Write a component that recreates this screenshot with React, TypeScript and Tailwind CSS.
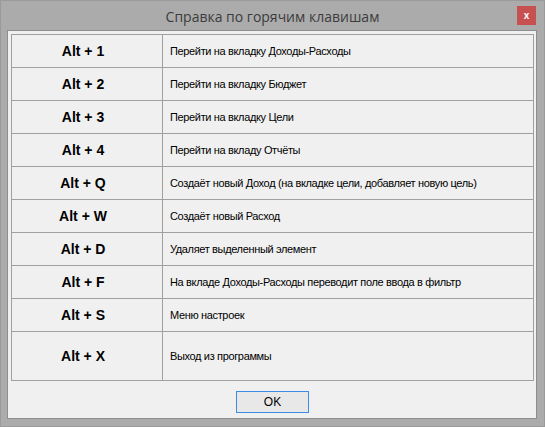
import React from "react";

const rows: { key: string; text: string; tall?: boolean }[] = [
  { key: "Alt + 1", text: "Перейти на вкладку Доходы-Расходы" },
  { key: "Alt + 2", text: "Перейти на вкладку Бюджет" },
  { key: "Alt + 3", text: "Перейти на вкладку Цели" },
  { key: "Alt + 4", text: "Перейти на вкладу Отчёты" },
  { key: "Alt + Q", text: "Создаёт новый Доход (на вкладке цели, добавляет новую цель)" },
  { key: "Alt + W", text: "Создаёт новый Расход" },
  { key: "Alt + D", text: "Удаляет выделенный элемент" },
  { key: "Alt + F", text: "На вкладе Доходы-Расходы переводит поле ввода в фильтр" },
  { key: "Alt + S", text: "Меню настроек" },
  { key: "Alt + X", text: "Выход из программы", tall: true },
];

export default function App() {
  return (
    <div className="w-[545px] h-[427px] bg-[#ababab] border border-[#9a9a9a] flex flex-col font-['Liberation_Sans',Arial,sans-serif]">
      {/* title bar */}
      <div className="h-[29px] flex items-center relative">
        <div className="flex-1 text-center text-[14px] text-[#3c3c3c] pt-[1px] font-['Open_Sans','Liberation_Sans',sans-serif]">
          Справка по горячим клавишам
        </div>
        <div className="absolute left-[516px] top-[5px] w-[19px] h-[19px] bg-[#c75050] flex items-center justify-center text-white text-[10px] font-bold leading-none">
          x
        </div>
      </div>
      {/* client area */}
      <div className="ml-[6px] mr-[7px] h-[389px] border border-[#8e8e8e] bg-[#f0f0f0] flex flex-col pl-[3px] pr-[2px] pt-[3px]">
        <div className="border border-[#a0a0a0] flex flex-col">
          {rows.map((r, i) => (
            <div
              key={r.key}
              className={`flex ${r.tall ? "h-[48px]" : "h-[33px]"} ${i < rows.length - 1 ? "border-b border-[#a0a0a0]" : ""}`}
            >
              <div className="w-[151px] border-r border-[#a0a0a0] flex items-center justify-center text-[14px] font-bold text-black pt-[1px] pr-[8px]">
                {r.key}
              </div>
              <div className="flex-1 flex items-center pl-[7px] text-[11px] tracking-[-0.35px] text-black pt-[1px]">
                {r.text}
              </div>
            </div>
          ))}
        </div>
        <div className="flex justify-center mt-[10px]">
          <div className="w-[73px] h-[22px] border border-[#3c8ce6] bg-[#e8e8e8] flex items-center justify-center text-[12px] text-black">
            OK
          </div>
        </div>
      </div>
    </div>
  );
}
